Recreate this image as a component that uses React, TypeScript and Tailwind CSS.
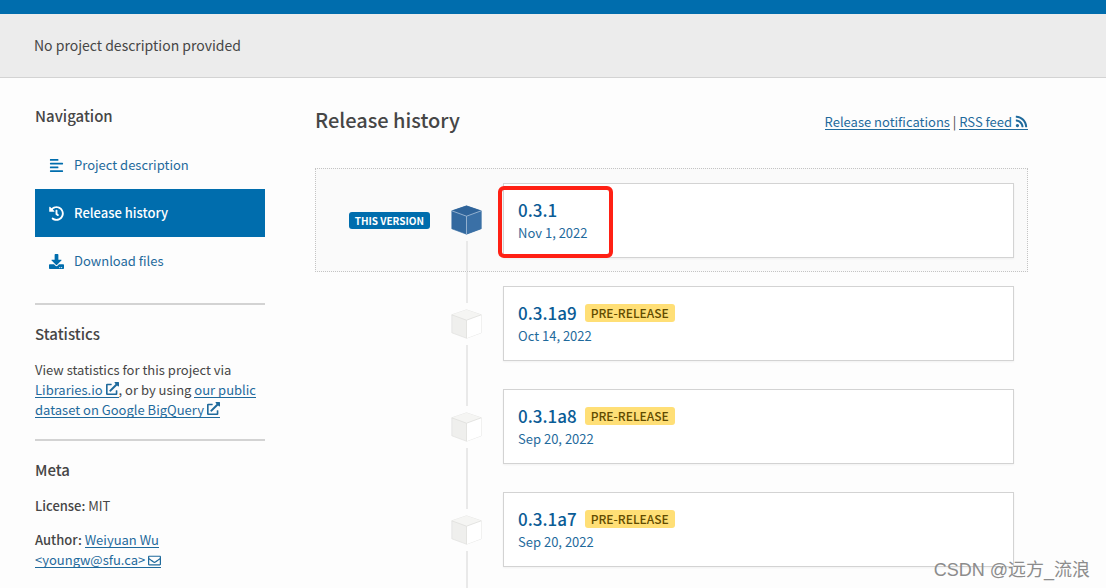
import type { ReactNode } from 'react';
import { FaAlignLeft, FaDownload, FaExternalLinkAlt, FaHistory, FaRegEnvelope, FaRss } from 'react-icons/fa';

const tabs = [
  { icon: FaAlignLeft, label: 'Project description', active: false },
  { icon: FaHistory, label: 'Release history', active: true },
  { icon: FaDownload, label: 'Download files', active: false }
];

const releases = [
  { version: '0.3.1', date: 'Nov 1, 2022', current: true },
  { version: '0.3.1a9', date: 'Oct 14, 2022', current: false },
  { version: '0.3.1a8', date: 'Sep 20, 2022', current: false },
  { version: '0.3.1a7', date: 'Sep 20, 2022', current: false }
];

// the underline is a background so that it also runs under the icon
function TextLink({ children }: { children: ReactNode }) {
  return (
    <a
      href="#"
      className="box-decoration-clone bg-[linear-gradient(#1f6a9c,#1f6a9c)] bg-[length:100%_1px] bg-[position:0_95%] bg-no-repeat text-[#1f6a9c]"
    >
      {children}
    </a>
  );
}

function Cube({ blue }: { blue: boolean }) {
  const top = blue ? '#2f649a' : '#f5f5f3';
  const left = blue ? '#33699f' : '#efefed';
  const right = blue ? '#3a70a6' : '#ffffff';
  const line = blue ? '#a9c2da' : '#dededc';

  return (
    <svg viewBox="0 0 31 30" className="my-1.5 h-[30px] w-[31px] shrink-0" aria-hidden="true">
      <path d="M15.5 0.8 30.2 5.8V23.8L15.5 29.2 0.8 23.8V5.8Z" fill={left} stroke={blue ? left : line} strokeWidth="0.6" />
      <path d="M15.5 0.8 30.2 5.8 15.5 11.2 0.8 5.8Z" fill={top} />
      <path d="M30.2 5.8 15.5 11.2V29.2L30.2 23.8Z" fill={right} />
      <path d="M0.8 5.8 15.5 11.2 30.2 5.8M15.5 11.2V29.2" fill="none" stroke={line} strokeWidth="0.8" />
    </svg>
  );
}

function Sidebar() {
  return (
    <aside className="w-[230px] shrink-0 text-[13px]/5">
      <h2 className="text-[15px]/5 font-medium">Navigation</h2>
      <nav className="mt-[15px] border-b-2 border-[#d3d3d3] pb-[18px]">
        {tabs.map((tab) => (
          <a
            key={tab.label}
            href="#"
            className={`flex h-12 items-center gap-2.5 px-3.5 ${
              tab.active ? 'bg-[#006dad] font-medium text-white' : 'text-[#1f6a9c]'
            }`}
          >
            <tab.icon className={`size-[15px] ${tab.active ? '' : 'text-[#006dad]'}`} />
            {tab.label}
          </a>
        ))}
      </nav>

      <section className="border-b-2 border-[#d3d3d3] pt-[19px] pb-[19px]">
        <h2 className="text-[15px]/5 font-medium">Statistics</h2>
        <p className="mt-4">
          View statistics for this project via{' '}
          <TextLink>
            Libraries.io <FaExternalLinkAlt className="inline size-[13px] align-baseline" />
          </TextLink>
          , or by using{' '}
          <TextLink>
            our public dataset on Google BigQuery <FaExternalLinkAlt className="inline size-[13px] align-baseline" />
          </TextLink>
        </p>
      </section>

      <section className="pt-[19px]">
        <h2 className="text-[15px]/5 font-medium">Meta</h2>
        <p className="mt-4">
          <strong className="font-medium">License:</strong> MIT
        </p>
        <p className="mt-3.5">
          <strong className="font-medium">Author:</strong>{' '}
          <TextLink>
            Weiyuan Wu &lt;youngw@sfu.ca&gt; <FaRegEnvelope className="inline size-[13px] align-[-2px]" />
          </TextLink>
        </p>
      </section>
    </aside>
  );
}

function Release({ version, date, current }: (typeof releases)[number]) {
  return (
    <li
      className={`flex gap-[21px] pr-[13px] ${
        current ? 'border border-dotted border-[#c4c4c4] bg-[#fafafa]' : 'border-x border-transparent'
      }`}
    >
      <div className="flex w-[114px] shrink-0 items-center justify-end">
        {current && (
          <span className="rounded-[3px] bg-[#006dad] px-1.5 text-[10px]/[17px] font-bold whitespace-nowrap text-white">
            THIS VERSION
          </span>
        )}
      </div>
      <div className="flex shrink-0 flex-col items-center">
        <div className={`w-0.5 flex-1 ${current ? '' : 'bg-[#e9e9e9]'}`} />
        <Cube blue={current} />
        <div className="w-0.5 flex-1 bg-[#e9e9e9]" />
      </div>
      <div className={`relative mt-3.5 min-w-0 flex-1 ${current ? 'mb-[13px]' : 'mb-3.5'}`}>
        <a
          href="#"
          className="flex h-[75px] flex-col justify-center border border-[#d3d3d3] bg-white px-3.5 pb-0.5 text-[#1f6a9c] shadow-xs"
        >
          <span className="flex items-center gap-2">
            <span className="text-[17px]/[26px] font-medium text-[#0b5c96]">{version}</span>
            {!current && (
              <span className="rounded-[3px] bg-[#ffdf76] px-1.5 text-xs/[18px] font-medium text-[#614b00]">
                PRE-RELEASE
              </span>
            )}
          </span>
          <span className="text-[13px]/5">{date}</span>
        </a>
        {current && (
          <div className="pointer-events-none absolute top-[3px] -left-[5px] h-[72px] w-[115px] rounded-md border-4 border-[#ff2014]" />
        )}
      </div>
    </li>
  );
}

export default function App() {
  return (
    <div className="relative flex min-h-screen flex-col bg-[#fdfdfd] font-['Noto_Sans_CJK_SC',sans-serif] text-[#464646]">
      <div className="h-3.5 bg-[#006dad]" />
      <header className="border-b border-[#d3d3d3] bg-[#ececec] px-[34px] py-5">
        <p className="text-sm/[23px]">No project description provided</p>
      </header>

      <div className="flex flex-1 gap-[50px] pr-[78px] pl-[35px]">
        <div className="pt-7">
          <Sidebar />
        </div>
        <main className="flex min-w-0 flex-1 flex-col pt-[27px]">
          <div className="flex items-center justify-between pb-[33px]">
            <h1 className="text-xl/[30px] font-medium">Release history</h1>
            <p className="pt-1 text-[13px]/5">
              <TextLink>Release notifications</TextLink> |{' '}
              <TextLink>
                RSS feed <FaRss className="inline size-[13px] align-[-1px]" />
              </TextLink>
            </p>
          </div>
          <ul>
            {releases.map((release) => (
              <Release key={release.version} {...release} />
            ))}
          </ul>
          {/* timeline runs on below the last release */}
          <div className="ml-[151px] w-0.5 flex-1 bg-[#e9e9e9]" />
        </main>
      </div>

      <div className="absolute right-4 bottom-1.5 font-['Liberation_Sans','Noto_Sans_CJK_SC',sans-serif] text-lg/6 text-[#8c8c8c]">
        CSDN @远方_流浪
      </div>
    </div>
  );
}
